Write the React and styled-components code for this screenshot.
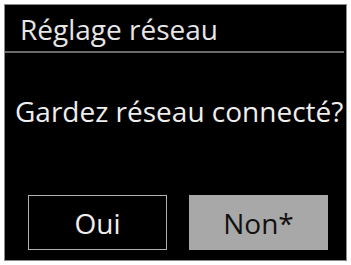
import React from 'react'
import styled, { createGlobalStyle } from 'styled-components'

const Global = createGlobalStyle`
    html, body {
        margin: 0;
        background: #fff;
    }
    body {
        font-family: "Open Sans", "Noto Sans", sans-serif;
    }
`
const Screen = styled.div`
    margin: 4px 0 0 4px;
    width: 343px;
    height: 257px;
    box-sizing: border-box;
    background: #000;
    border: 1px solid #8a8a8a;
    display: flex;
    flex-direction: column;
`
const Header = styled.div`
    height: 46px;
    padding-left: 15px;
    border-bottom: 2px solid #6a6a6a;
    color: #e6e6e6;
    font-size: 28px;
    line-height: 48px;
    margin-right: 2px;
`
const Question = styled.div`
    margin-top: 38px;
    padding-left: 10px;
    color: #eeeeee;
    font-size: 28px;
    line-height: 40px;
    white-space: nowrap;
`
const Buttons = styled.div`
    margin-top: auto;
    margin-bottom: 10px;
    padding-left: 23px;
    display: flex;
    gap: 22px;
`
const Choice = styled.div`
    width: 139px;
    height: 55px;
    box-sizing: border-box;
    display: flex;
    align-items: center;
    justify-content: center;
    font-size: 28px;
    padding-top: 1px;
    border: 1px solid ${p => p.selected ? '#a8a8a8' : '#b0b0b0'};
    background: ${p => p.selected ? '#a8a8a8' : '#000'};
    color: ${p => p.selected ? '#111' : '#eeeeee'};
`

const App = () => {
    return (
        <>
            <Global />
            <Screen>
                <Header>Réglage réseau</Header>
                <Question>Gardez réseau connecté?</Question>
                <Buttons>
                    <Choice>Oui</Choice>
                    <Choice selected>Non*</Choice>
                </Buttons>
            </Screen>
        </>
    )
}

export default App
